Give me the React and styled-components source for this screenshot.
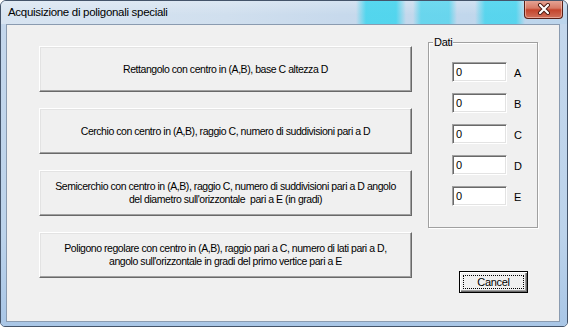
import React from 'react';
import styled, { createGlobalStyle } from 'styled-components';

const Global = createGlobalStyle`
  html, body { margin: 0; padding: 0; background: #ffffff; }
  body { width: 568px; height: 327px; overflow: hidden; }
  * { box-sizing: border-box; }
`;

const Window = styled.div`
  width: 568px;
  height: 327px;
  display: flex;
  flex-direction: column;
  border: 1px solid #44546a;
  border-radius: 6px 6px 5px 5px;
  overflow: hidden;
  background: #bfd4ea;
`;

const TitleBar = styled.div`
  height: 23px;
  flex: none;
  display: flex;
  align-items: flex-start;
  padding-left: 7px;
  background:
    linear-gradient(to right, rgba(45, 212, 238, 0) 355px, rgba(45, 212, 238, 0.75) 365px, rgba(45, 212, 238, 0.75) 395px, rgba(45, 212, 238, 0) 405px),
    linear-gradient(to right, rgba(45, 212, 238, 0) 412px, rgba(45, 212, 238, 0.6) 420px, rgba(45, 212, 238, 0.6) 448px, rgba(45, 212, 238, 0) 456px),
    linear-gradient(to right, rgba(45, 212, 238, 0) 474px, rgba(45, 212, 238, 0.7) 484px, rgba(45, 212, 238, 0.7) 515px, rgba(45, 212, 238, 0) 524px),
    linear-gradient(to bottom, rgba(255,255,255,0.25), rgba(255,255,255,0) 60%),
    linear-gradient(to right, #d8e4f1 0%, #d0dfee 40%, #c7d9ec 60%, #bcd5ec 100%);
`;

const Title = styled.span`
  font-family: "Liberation Sans", Arial, sans-serif;
  font-size: 11.5px;
  line-height: 23px;
  color: #000;
  letter-spacing: -0.3px;
`;

const CloseButton = styled.div`
  margin-left: auto;
  margin-right: 4px;
  margin-top: -1px;
  width: 39px;
  height: 19px;
  border: 1px solid #5a1f16;
  border-top: none;
  border-radius: 0 0 4px 4px;
  background: linear-gradient(to bottom, #e6a89a 0%, #d77a66 45%, #c4442c 55%, #d0705a 100%);
  display: flex;
  align-items: center;
  justify-content: center;
  box-shadow: inset 0 0 0 1px rgba(255, 220, 210, 0.5);
`;

const FrameBody = styled.div`
  flex: 1;
  display: flex;
  padding: 0 7px 4px 5px;
  background: linear-gradient(to bottom, #c4d7ec 0%, #bcd3eb 70%, #a9c6e6 100%);
`;

const Client = styled.div`
  flex: 1;
  display: flex;
  align-items: flex-start;
  border: 1px solid #8a9bb0;
  background: #f0f0f0;
  padding: 17px 0 0 32px;
  font-family: "Liberation Sans", Arial, sans-serif;
  font-size: 11px;
  color: #000;
`;

const ButtonColumn = styled.div`
  width: 373px;
  margin-top: 4px;
  display: flex;
  flex-direction: column;
  gap: 16px;
`;

const ActionButton = styled.div`
  height: 46px;
  display: flex;
  align-items: center;
  justify-content: center;
  text-align: center;
  background: #f0f0f0;
  border-top: 1px solid #ffffff;
  border-left: 1px solid #ffffff;
  border-right: 1px solid #696969;
  border-bottom: 1px solid #696969;
  box-shadow: inset -1px -1px 0 #a0a0a0, inset 1px 1px 0 #e3e3e3;
  font-size: 10.5px;
  line-height: 13px;
  letter-spacing: -0.45px;
  padding: 0 6px;
`;

const Line = styled.div`
  white-space: pre;
`;

const RightColumn = styled.div`
  margin-left: 16px;
  display: flex;
  flex-direction: column;
`;

const GroupBox = styled.div`
  position: relative;
  width: 110px;
  height: 186px;
  border: 1px solid #a0a0a0;
  box-shadow: inset 1px 1px 0 #ffffff, 1px 1px 0 #ffffff;
  padding: 19px 0 0 23px;
  display: flex;
  flex-direction: column;
  gap: 11px;
`;

const Legend = styled.span`
  position: absolute;
  top: -7px;
  left: 4px;
  padding: 0 1px;
  background: #f0f0f0;
  font-size: 11px;
  line-height: 13px;
  letter-spacing: -0.3px;
`;

const FieldRow = styled.div`
  display: flex;
  align-items: center;
  gap: 7px;
`;

const Field = styled.div`
  width: 55px;
  height: 20px;
  background: #ffffff;
  border-top: 1px solid #a0a0a0;
  border-left: 1px solid #a0a0a0;
  border-right: 1px solid #ffffff;
  border-bottom: 1px solid #ffffff;
  box-shadow: inset 1px 1px 0 #696969, inset -1px -1px 0 #e3e3e3;
  padding: 2px 0 0 3px;
  font-size: 11px;
  line-height: 14px;
`;

const FieldLabel = styled.span`
  font-size: 11px;
  line-height: 13px;
  padding-top: 2px;
`;

const CancelButton = styled.div`
  margin-top: 43px;
  margin-left: 31px;
  width: 69px;
  height: 22px;
  border: 1px solid #000;
  background: #f0f0f0;
  box-shadow: inset 1px 1px 0 #ffffff, inset -1px -1px 0 #696969, inset -2px -2px 0 #a0a0a0;
  padding: 3px;
  display: flex;
`;

const FocusRect = styled.div`
  flex: 1;
  border: 1px dotted #000;
  display: flex;
  align-items: center;
  justify-content: center;
  font-size: 11px;
  line-height: 13px;
  letter-spacing: -0.3px;
`;

const buttons = [
  ['Rettangolo con centro in (A,B), base C altezza D'],
  ['Cerchio con centro in (A,B), raggio C, numero di suddivisioni pari a D'],
  [
    'Semicerchio con centro in (A,B), raggio C, numero di suddivisioni pari a D angolo',
    "del diametro sull'orizzontale  pari a E (in gradi)",
  ],
  [
    'Poligono regolare con centro in (A,B), raggio pari a C, numero di lati pari a D,',
    "angolo sull'orizzontale in gradi del primo vertice pari a E",
  ],
];

const fields = ['A', 'B', 'C', 'D', 'E'];

export default function App() {
  return (
    <>
      <Global />
      <Window>
        <TitleBar>
          <Title>Acquisizione di poligonali speciali</Title>
          <CloseButton>
            <svg width="14" height="12" viewBox="0 0 14 12">
              <path d="M3 2 L11 10 M11 2 L3 10" stroke="#4a1a12" strokeWidth="4" strokeLinecap="round" />
              <path d="M3 2 L11 10 M11 2 L3 10" stroke="#ffffff" strokeWidth="2.2" strokeLinecap="round" />
            </svg>
          </CloseButton>
        </TitleBar>
        <FrameBody>
          <Client>
            <ButtonColumn>
              {buttons.map((lines, i) => (
                <ActionButton key={i}>
                  <div>
                    {lines.map((l, j) => (
                      <Line key={j}>{l}</Line>
                    ))}
                  </div>
                </ActionButton>
              ))}
            </ButtonColumn>
            <RightColumn>
              <GroupBox>
                <Legend>Dati</Legend>
                {fields.map((f) => (
                  <FieldRow key={f}>
                    <Field>0</Field>
                    <FieldLabel>{f}</FieldLabel>
                  </FieldRow>
                ))}
              </GroupBox>
              <CancelButton>
                <FocusRect>Cancel</FocusRect>
              </CancelButton>
            </RightColumn>
          </Client>
        </FrameBody>
      </Window>
    </>
  );
}
